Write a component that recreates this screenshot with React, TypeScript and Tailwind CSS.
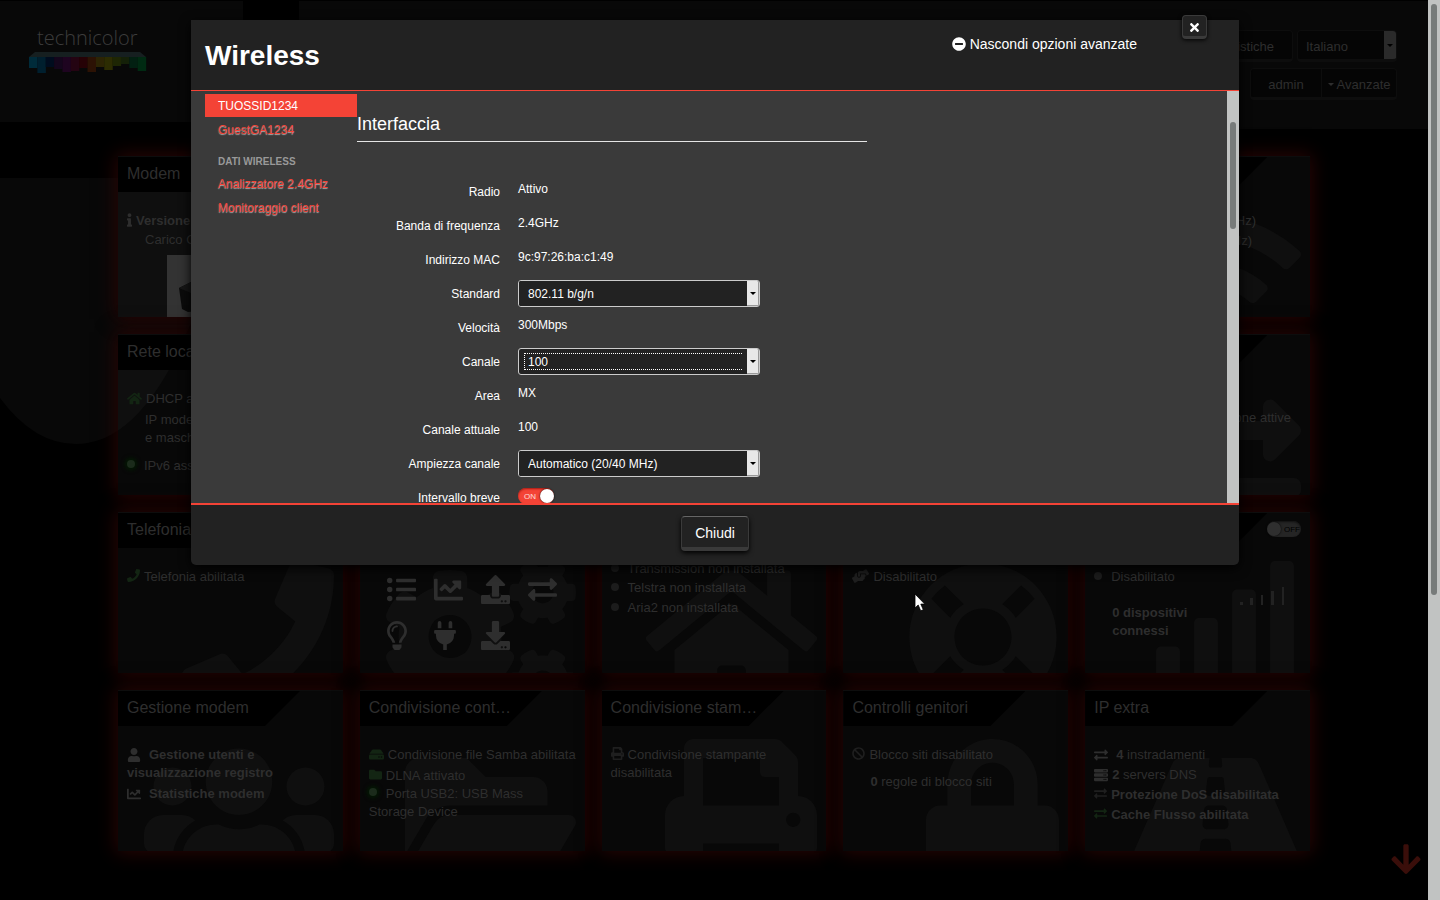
import { FC, ReactNode } from 'react'
import { IconType } from 'react-icons'
import {
  FaArrowDown,
  FaBan,
  FaChartLine,
  FaCogs,
  FaDownload,
  FaExchangeAlt,
  FaFolder,
  FaFolderOpen,
  FaHandsHelping,
  FaHdd,
  FaHome,
  FaInfo,
  FaLifeRing,
  FaListUl,
  FaLock,
  FaMinusCircle,
  FaPhone,
  FaPlug,
  FaPrint,
  FaRegLightbulb,
  FaRoad,
  FaServer,
  FaSignal,
  FaTimes,
  FaUpload,
  FaUser,
  FaUsers,
  FaWifi,
} from 'react-icons/fa'

const Card: FC<{
  title?: string
  watermark?: IconType
  watermarkClass?: string
  action?: ReactNode
  children?: ReactNode
}> = ({ title, watermark: Watermark, watermarkClass, action, children }) => {
  return (
    <section className="relative h-[161px] bg-white/3 shadow-[0_0_18px_2px_#290504]">
      {Watermark && (
        <div className="absolute inset-0 overflow-hidden">
          <Watermark
            className={`absolute top-[49px] right-[9px] h-[152px] text-[#0f0f0f] ${
              watermarkClass ?? 'w-[152px]'
            }`}
          />
        </div>
      )}
      <div className="relative border-t border-[#0d0d0d]">
        <h2 className="h-[35px] w-[182px] bg-black pl-[9px] text-base leading-[34px] [clip-path:polygon(0_0,100%_0,147px_100%,0_100%)]">
          {title}
        </h2>
        {action}
        <div className="pt-5 pl-[9px] leading-[18px]">{children}</div>
      </div>
    </section>
  )
}

const Dot: FC<{ on?: boolean }> = ({ on }) => (
  <span
    className={`mr-[9px] mb-1 inline-block size-2 rounded-full align-middle ${
      on ? 'bg-[#1b2b1b] shadow-[0_0_4px_2px_#031a03]' : 'bg-[#1c1c1c]'
    }`}
  />
)

const Toggle: FC<{ id: string; on?: boolean; label?: string }> = ({ id, on, label }) => (
  <span className="relative inline-flex">
    <input
      id={id}
      type="checkbox"
      role="switch"
      aria-label={label}
      defaultChecked={on}
      className={`h-4 appearance-none rounded-full ${
        on
          ? 'w-9 bg-[#f44336] shadow-[inset_0_1px_2px_#a51b12]'
          : 'w-[34px] bg-[#252525] shadow-[inset_0_1px_2px_#111]'
      }`}
    />
    <span
      className={`pointer-events-none absolute top-1 text-[8px] leading-[9px] ${
        on ? 'left-[6px] text-white/80' : 'right-[1px] text-black'
      }`}
    >
      {on ? 'ON' : 'OFF'}
    </span>
    <span
      className={`pointer-events-none absolute top-px size-[14px] rounded-full shadow-[0_0_2px_#000] ${
        on ? 'right-0 bg-white' : 'left-0 bg-[#2f2f2f]'
      }`}
    />
  </span>
)

const logoBars = [
  ['#002b3a', 11],
  ['#001f2e', 16],
  ['#000c1e', 10],
  ['#14061c', 12],
  ['#1e0420', 15],
  ['#240412', 14],
  ['#260206', 11],
  ['#2c1204', 15],
  ['#2c2404', 10],
  ['#2c2c02', 13],
  ['#1e2604', 9],
  ['#142008', 7],
  ['#022012', 11],
  ['#002a12', 14],
] as const

const Logo = () => (
  <div className="w-[118px]">
    <p className="mb-1 pl-2 font-['Open_Sans',sans-serif] text-xl leading-5 font-light whitespace-nowrap text-[#3c3c3c]">
      technicolor
    </p>
    <svg width="118" height="22" viewBox="0 0 118 22" aria-hidden="true">
      <path d="M6 0h105l6 5H0z" fill="#161f20" />
      {logoBars.map(([fill, h], i) => (
        <rect key={i} x={i * 8.36} y="5" width="8.5" height={h} fill={fill} />
      ))}
    </svg>
  </div>
)

const Caret = () => (
  <span className="border-x-[3px] border-t-[3px] border-x-transparent border-t-black" />
)

const Row: FC<{ label: string; id?: string; children: ReactNode }> = ({ label, id, children }) => (
  <div className="flex h-[34px] items-start gap-[18px]">
    {id ? (
      <label htmlFor={id} className="w-[143px] pt-[5px] text-right leading-[18px]">
        {label}
      </label>
    ) : (
      <span className="w-[143px] pt-[5px] text-right leading-[18px]">{label}</span>
    )}
    {id ? children : <span className="pt-[2px] leading-[18px]">{children}</span>}
  </div>
)

const SelectField: FC<{ id: string; value: string; focused?: boolean }> = ({
  id,
  value,
  focused,
}) => (
  <div className="flex h-[27px] w-[242px] overflow-hidden rounded-[3px] border border-[#ccc] bg-[#222]">
    <select
      id={id}
      defaultValue={value}
      className={`min-w-0 flex-1 appearance-none bg-[#222] outline-none ${
        focused ? 'mx-[5px] my-1 border border-r-0 border-dotted border-white pl-[3px]' : 'pl-[9px]'
      }`}
    >
      <option>{value}</option>
    </select>
    <span className="pointer-events-none flex w-3 items-center justify-center border-r border-b border-[#999] bg-[#e8e8e8]">
      <Caret />
    </span>
  </div>
)

const menuLink = 'pl-[13px] leading-6 text-[#f44336] [text-shadow:0_1px_1px_#aaa]'
const green = 'text-[#132513]'
const headerButton = 'h-8 border border-b-[3px] border-[#0d0d0d] bg-[#050505] pt-[3px]'

export default function App() {
  return (
    <div className="relative flex h-screen overflow-hidden bg-black font-['Liberation_Sans',Arial,sans-serif] text-[13px] text-[#2e2e2e]">
      <div className="relative min-w-0 flex-1 overflow-hidden">
        <svg className="absolute inset-0 h-full w-full" aria-hidden="true">
          <rect y="1" width="243" height="121" fill="#080808" />
          <rect x="299" y="1" width="100%" height="128" fill="#080808" />
          <path d="M0 178h260L170 368q-42 76-94 76q-42 0-76-46z" fill="#080808" />
        </svg>

        <header className="relative flex h-[146px] items-start justify-between pt-7 pl-[29px]">
          <Logo />
          <div className="flex flex-col items-end gap-[6px] pt-[2px] pr-[31px]">
            <div className="flex gap-1">
              <button className={`${headerButton} w-[90px] rounded-sm pr-[18px] text-right`}>
                Statistiche
              </button>
              <div className="flex h-8 w-[100px] overflow-hidden rounded-sm border border-b-[3px] border-[#0d0d0d] bg-[#050505]">
                <select
                  aria-label="Lingua"
                  className="min-w-0 flex-1 appearance-none pt-[3px] pl-2"
                >
                  <option>Italiano</option>
                </select>
                <span className="pointer-events-none flex w-3 items-center justify-center bg-[#2a2a2a]">
                  <Caret />
                </span>
              </div>
            </div>
            <div className="flex">
              <button className={`${headerButton} w-[72px] rounded-l-sm`}>admin</button>
              <button
                className={`${headerButton} flex w-[75px] items-center justify-center gap-[3px] rounded-r-sm border-l-0`}
              >
                <span className="border-x-[3px] border-t-[3px] border-x-transparent border-t-[#2e2e2e]" />
                Avanzate
              </button>
            </div>
          </div>
        </header>

        <main className="relative mx-auto grid w-full max-w-[1192px] grid-cols-5 gap-x-[17px] gap-y-[17px] pt-[10px]">
          <Card title="Modem">
            <p className="font-bold">
              <FaInfo className="mr-1 mb-1 inline h-[14px] w-[5px]" />
              Versione
            </p>
            <p className="pl-[18px]">Carico CPU</p>
            <div className="mt-[6px] ml-10 h-[62px] w-[120px] bg-[#333]">
              <svg width="120" height="62" viewBox="0 0 120 62" aria-hidden="true">
                <path d="M12 33l14-7 80 4v20l-85 7-6-3z" fill="#0b0b0b" />
                <path d="M12 33l14-7 80 4-82 8z" fill="#161616" />
              </svg>
            </div>
          </Card>
          <Card />
          <Card />
          <Card />
          <Card watermark={FaWifi} watermarkClass="w-[190px]">
            <p className="pr-[54px] text-right">Wi-Fi attivo (2.4GHz)</p>
            <p className="mt-[2px] pr-[58px] text-right">Wi-Fi attivo (5GHz)</p>
          </Card>

          <Card title="Rete locale">
            <p>
              <FaHome className={`mr-1 mb-[3px] inline size-[15px] ${green}`} />
              DHCP abilitato
            </p>
            <p className="mt-[2px] pl-[18px]">
              IP modem
              <br />e maschera
            </p>
            <p className="mt-[10px]">
              <Dot on />
              IPv6 assente
            </p>
          </Card>
          <Card />
          <Card />
          <Card />
          <Card watermark={FaExchangeAlt}>
            <p className="pt-[19px] pr-[19px] text-right">Connessione attive</p>
          </Card>

          <Card title="Telefonia" watermark={FaPhone}>
            <p>
              <FaPhone className={`mr-1 mb-1 inline size-[13px] ${green}`} />
              Telefonia abilitata
            </p>
          </Card>
          <Card watermark={FaCogs} watermarkClass="w-[190px]">
            <div className="grid w-[206px] grid-cols-4 gap-y-[17px] pt-[7px] pl-[18px]">
              <FaListUl className="size-[29px]" />
              <FaChartLine className="size-[29px]" />
              <FaUpload className="size-[29px]" />
              <FaExchangeAlt className="size-[29px]" />
              <FaRegLightbulb className="h-[29px] w-5" />
              <FaPlug className="h-[29px] w-[22px]" />
              <FaDownload className="size-[29px]" />
            </div>
          </Card>
          <Card watermark={FaHome} watermarkClass="w-[171px]">
            <p className="-mt-2">
              <Dot />
              Transmission non installata
            </p>
            <p className="mt-px">
              <Dot />
              Telstra non installata
            </p>
            <p className="mt-[2px]">
              <Dot />
              Aria2 non installata
            </p>
          </Card>
          <Card watermark={FaLifeRing}>
            <p>
              <FaHandsHelping className="mr-1 mb-1 inline h-[14px] w-[17px] text-[#1f1f1f]" />
              Disabilitato
            </p>
          </Card>
          <Card
            watermark={FaSignal}
            watermarkClass="w-[190px]"
            action={
              <div className="absolute top-2 right-[9px] flex">
                <Toggle id="hotspot" label="Hotspot" />
              </div>
            }
          >
            <p>
              <Dot />
              Disabilitato
            </p>
            <div className="mt-[18px] flex justify-between pr-[25px] pl-[18px]">
              <p className="font-bold">
                0 dispositivi
                <br />
                connessi
              </p>
              <svg
                className="-mt-[18px]"
                width="46"
                height="20"
                viewBox="0 0 46 20"
                fill="#222"
                aria-hidden="true"
              >
                <rect x="1" y="16" width="3" height="3" />
                <rect x="11" y="12" width="3" height="7" />
                <rect x="22" y="9" width="2" height="10" />
                <rect x="32" y="5" width="3" height="14" />
                <rect x="43" y="1" width="2" height="18" />
              </svg>
            </div>
          </Card>

          <Card title="Gestione modem" watermark={FaUsers} watermarkClass="w-[190px]">
            <p className="font-bold">
              <FaUser className="mr-2 mb-[2px] inline size-[14px]" />
              Gestione utenti e
              <br />
              visualizzazione registro
            </p>
            <p className="mt-[3px] font-bold">
              <FaChartLine className="mr-2 mb-[2px] inline size-[14px]" />
              Statistiche modem
            </p>
          </Card>
          <Card title="Condivisione cont…" watermark={FaFolderOpen} watermarkClass="w-[171px]">
            <p className="whitespace-nowrap">
              <FaHdd className={`mr-1 mb-[3px] inline size-[15px] ${green}`} />
              Condivisione file Samba abilitata
            </p>
            <p className="mt-[2px]">
              <FaFolder className={`mr-1 mb-1 inline size-[13px] ${green}`} />
              DLNA attivato
            </p>
            <p>
              <Dot on />
              Porta USB2: USB Mass
              <br />
              Storage Device
            </p>
          </Card>
          <Card title="Condivisione stam…" watermark={FaPrint}>
            <p>
              <FaPrint className="mr-1 mb-1 inline size-[13px] text-[#1f1f1f]" />
              Condivisione stampante
              <br />
              disabilitata
            </p>
          </Card>
          <Card title="Controlli genitori" watermark={FaLock} watermarkClass="w-[133px]">
            <p>
              <FaBan className="mr-1 mb-1 inline size-[13px] text-[#1f1f1f]" />
              Blocco siti disabilitato
            </p>
            <p className="mt-[9px] pl-[18px]">
              <b>0</b> regole di blocco siti
            </p>
          </Card>
          <Card title="IP extra" watermark={FaRoad} watermarkClass="w-[171px]">
            <div className="flex flex-col gap-[2px]">
              <p>
                <FaExchangeAlt className="mr-2 mb-[2px] inline size-[14px]" />
                <b>4</b> instradamenti
              </p>
              <p>
                <FaServer className="mr-1 mb-[2px] inline size-[14px]" />
                <b>2</b> servers DNS
              </p>
              <p className="font-bold">
                <FaExchangeAlt className="mr-1 mb-1 inline size-[13px] text-[#1f1f1f]" />
                Protezione DoS disabilitata
              </p>
              <p className="font-bold">
                <FaExchangeAlt className={`mr-1 mb-1 inline size-[13px] ${green}`} />
                Cache Flusso abilitata
              </p>
            </div>
          </Card>
        </main>

        <a
          href="#bottom"
          aria-label="Vai in fondo"
          className="absolute right-[5px] bottom-6 text-[#3a0e0a]"
        >
          <FaArrowDown className="size-[34px]" />
        </a>
      </div>

      <div className="w-3 bg-[#c1c3c2] px-[3px] pt-1">
        <div className="h-[591px] rounded-full bg-[#777b7a]" />
      </div>

      <div
        role="dialog"
        aria-labelledby="dialog-title"
        className="absolute top-5 right-[201px] left-[191px] rounded-b-[5px] bg-[#222] text-white shadow-[0_3px_12px_black]"
      >
        <header className="flex h-[71px] items-start justify-between border-b border-[#f44336] pl-[14px]">
          <h1 id="dialog-title" className="text-[28px] leading-[71px] font-bold">
            Wireless
          </h1>
          <a href="#advanced" className="mt-[14px] mr-[102px] flex items-center gap-1 text-sm">
            <FaMinusCircle />
            Nascondi opzioni avanzate
          </a>
          <button
            aria-label="Chiudi finestra"
            className="absolute -top-[5px] right-8 flex h-6 w-[25px] items-center justify-center rounded-sm border border-b-[3px] border-[#3a3a3a] bg-[#222] pt-[2px] shadow-[0_1px_4px_black]"
          >
            <FaTimes className="size-[13px]" />
          </button>
        </header>

        <div className="flex h-[412px] overflow-hidden bg-[#3a3a3a] pl-[14px] text-xs">
          <nav className="flex w-[152px] flex-col pt-[3px]">
            <a href="#tuossid" className="mb-px h-[23px] bg-[#f44336] pl-[13px] leading-6">
              TUOSSID1234
            </a>
            <a href="#guest" className={menuLink}>
              GuestGA1234
            </a>
            <p className="mt-[9px] pl-[13px] text-[10px] leading-[21px] font-bold text-[#999]">
              DATI WIRELESS
            </p>
            <a href="#analyzer" className={menuLink}>
              Analizzatore 2.4GHz
            </a>
            <a href="#clients" className={menuLink}>
              Monitoraggio client
            </a>
          </nav>
          <div className="min-w-0 flex-1">
            <h3 className="mb-9 w-[510px] border-b border-[#e5e5e5] pt-[18px] pb-[2px] text-lg leading-[30px]">
              Interfaccia
            </h3>
            <Row label="Radio">Attivo</Row>
            <Row label="Banda di frequenza">2.4GHz</Row>
            <Row label="Indirizzo MAC">9c:97:26:ba:c1:49</Row>
            <Row label="Standard" id="standard">
              <SelectField id="standard" value="802.11 b/g/n" />
            </Row>
            <Row label="Velocità">300Mbps</Row>
            <Row label="Canale" id="channel">
              <SelectField id="channel" value="100" focused />
            </Row>
            <Row label="Area">MX</Row>
            <Row label="Canale attuale">100</Row>
            <Row label="Ampiezza canale" id="width">
              <SelectField id="width" value="Automatico (20/40 MHz)" />
            </Row>
            <Row label="Intervallo breve" id="sgi">
              <span className="flex pt-1">
                <Toggle id="sgi" on />
              </span>
            </Row>
          </div>
          <div className="w-3 bg-[#c1c3c2] px-[3px] pt-[31px]">
            <div className="h-[107px] rounded-full bg-[#777b7a]" />
          </div>
        </div>

        <footer className="flex h-[62px] items-start justify-center border-t-2 border-[#f44336] pt-[11px]">
          <button className="h-[35px] w-[68px] rounded-sm border border-b-4 border-[#3a3a3a] border-t-[#666] bg-[#222] pt-[2px] text-sm shadow-[0_2px_5px_black]">
            Chiudi
          </button>
        </footer>
      </div>

      <svg
        className="pointer-events-none absolute top-[593px] left-[914px]"
        width="14"
        height="20"
        viewBox="0 0 14 20"
        aria-hidden="true"
      >
        <path
          d="M1 1v14l3.200-3 2.500 5.800 2.600-1.100-2.500-5.600h4z"
          fill="white"
          stroke="black"
          strokeWidth="0.800"
        />
      </svg>
    </div>
  )
}
